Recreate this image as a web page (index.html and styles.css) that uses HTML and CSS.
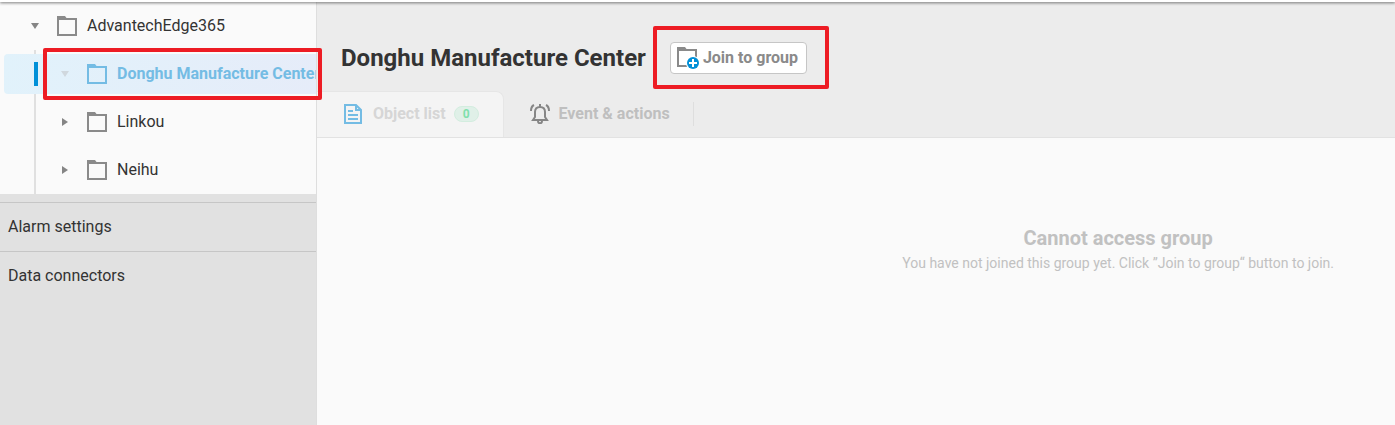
FILE: index.html
```html
<!DOCTYPE html>
<html lang="en">
<head>
    <meta charset="UTF-8">
    <meta name="viewport" content="width=device-width, initial-scale=1.0">
    <title>Donghu Manufacture Center</title>
    <link rel="stylesheet" href="styles.css">
</head>
<body>
    <svg class="sprite" aria-hidden="true">
        <symbol id="folder" viewBox="0 0 20 20">
            <path fill="currentColor" fill-rule="evenodd" d="M0 0H8L9.5 2H20V20H0ZM2 4V18H18V4Z"/>
        </symbol>
    </svg>

    <header class="topbar"></header>

    <div class="layout">
        <aside class="sidebar">
            <nav class="tree">
                <div class="row">
                    <span class="arrow arrow-down"></span>
                    <svg class="icon"><use href="#folder"/></svg>
                    <a href="#">AdvantechEdge365</a>
                </div>
                <div class="children">
                    <div class="row selected">
                        <span class="arrow arrow-down"></span>
                        <svg class="icon"><use href="#folder"/></svg>
                        <a href="#">Donghu Manufacture Center</a>
                    </div>
                    <div class="row">
                        <span class="arrow arrow-right"></span>
                        <svg class="icon"><use href="#folder"/></svg>
                        <a href="#">Linkou</a>
                    </div>
                    <div class="row">
                        <span class="arrow arrow-right"></span>
                        <svg class="icon"><use href="#folder"/></svg>
                        <a href="#">Neihu</a>
                    </div>
                </div>
                <div class="highlight highlight-tree"></div>
            </nav>
            <nav class="links">
                <a href="#">Alarm settings</a>
                <a href="#">Data connectors</a>
            </nav>
        </aside>

        <main class="content">
            <div class="group-header">
                <div class="title-row">
                    <h1>Donghu Manufacture Center</h1>
                    <div class="join">
                        <button type="button" class="join-btn">
                            <svg width="22" height="22" viewBox="0 0 22 22" aria-hidden="true">
                                <path fill="#8a8a8a" fill-rule="evenodd" d="M0 0H8L9.5 2H20V20H0ZM2 4V18H18V4Z"/>
                                <circle cx="16" cy="16" r="7" fill="#fff"/>
                                <circle cx="16" cy="16" r="6" fill="#0090d8"/>
                                <path d="M16 12V20M12 16H20" stroke="#fff" stroke-width="2"/>
                            </svg>
                            Join to group
                        </button>
                        <div class="highlight highlight-join"></div>
                    </div>
                </div>
                <div class="tabs">
                    <a href="#" class="tab active">
                        <svg width="20" height="20" viewBox="0 0 20 20" fill="none" stroke="#74bce4" stroke-width="2" aria-hidden="true">
                            <path d="M2 1H13L18 6V19H2Z"/>
                            <path d="M13 1V6H18M5 7H10M5 11H15M5 15H15"/>
                        </svg>
                        Object list
                        <span class="badge">0</span>
                    </a>
                    <a href="#" class="tab">
                        <svg width="20" height="20" viewBox="0 0 20 20" fill="none" stroke="#858585" stroke-width="2" aria-hidden="true">
                            <path d="M3 16H17L15 13V8C15 5 13 3 10 3C7 3 5 5 5 8V13ZM10 0V3"/>
                            <path d="M8 17C8 20 12 20 12 17M4 1C2 2 1 4 1 7M16 1C18 2 19 4 19 7"/>
                        </svg>
                        Event &amp; actions
                    </a>
                </div>
            </div>

            <section class="empty">
                <div class="message">
                    <h2>Cannot access group</h2>
                    <p>You have not joined this group yet. Click ”Join to group“ button to join.</p>
                </div>
            </section>
        </main>
    </div>
</body>
</html>
```
FILE: styles.css
```css
* {
    box-sizing: border-box;
}
body {
    margin: 0;
    min-height: 100vh;
    display: flex;
    flex-direction: column;
    font-family: Roboto, sans-serif;
    font-size: 16px;
    line-height: 24px;
    color: #333;
    background-color: #fafafa;
}
a {
    color: inherit;
    text-decoration: none;
}
h1, h2, p {
    margin: 0;
}
.sprite {
    position: absolute;
    width: 0;
    height: 0;
}
.topbar {
    position: relative;
    z-index: 1;
    height: 2px;
    background-color: #fff;
    box-shadow: 0 1px 3px rgba(0, 0, 0, 0.6);
}
.layout {
    flex: 1;
    display: grid;
    grid-template-columns: 317px 1fr;
}

/* sidebar */
.sidebar {
    background-color: #e1e1e1;
    border-right: 1px solid #dedede;
}
.tree {
    position: relative;
    background-color: #fafafa;
}
.row {
    display: flex;
    align-items: center;
    height: 48px;
    padding-left: 30px;
    white-space: nowrap;
    overflow: hidden;
}
.children {
    position: relative;
    padding-top: 4px;
}
.children::before {
    content: "";
    position: absolute;
    top: 0;
    bottom: 0;
    left: 34px;
    width: 2px;
    background-color: #e0e0e0;
}
.children .row {
    padding-left: 60px;
}
.arrow {
    flex: none;
    width: 10px;
    margin-right: 17px;
    display: flex;
    justify-content: center;
    color: #858585;
}
.arrow::before {
    content: "";
    border: 4px solid transparent;
}
.arrow-down::before {
    border-width: 6px 4px 0;
    border-top-color: currentColor;
}
.arrow-right::before {
    border-width: 4px 0 4px 6px;
    border-left-color: currentColor;
}
.icon {
    flex: none;
    width: 20px;
    height: 20px;
    margin-right: 10px;
    color: #8a8a8a;
}
.children .selected {
    position: relative;
    height: 40px;
    margin: 0 0 4px 4px;
    padding-left: 56px;
    border-radius: 4px 0 0 4px;
    background: linear-gradient(100deg, #e1f2fb, #e6ecf9);
    color: #74bce4;
    font-weight: 700;
}
.selected::before {
    content: "";
    position: absolute;
    top: 8px;
    left: 30px;
    width: 4px;
    height: 24px;
    background-color: #0090d8;
}
.selected .arrow {
    color: #d0d8de;
}
.selected .icon {
    color: #74bce4;
}
.links {
    padding-top: 8px;
}
.links a {
    display: block;
    padding: 12px 8px;
    border-top: 1px solid #c6c6c6;
}

/* content */
.content {
    display: flex;
    flex-direction: column;
    min-width: 0;
}
.group-header {
    background-color: #ececec;
    border-bottom: 1px solid #e2e2e2;
}
.title-row {
    display: flex;
    align-items: center;
    gap: 24px;
    padding: 40px 24px 17px;
}
h1 {
    font-size: 24px;
    line-height: 32px;
    font-weight: 700;
}
.join {
    position: relative;
}
.join-btn {
    display: flex;
    align-items: center;
    gap: 4px;
    height: 32px;
    padding: 0 8px 0 6px;
    border: 1px solid #c6c6c6;
    border-radius: 4px;
    background-color: #fff;
    color: #8a8a8a;
    font: 700 16px/24px Roboto, sans-serif;
}
.tabs {
    display: flex;
    height: 46px;
}
.tab {
    position: relative;
    display: flex;
    align-items: center;
    gap: 9px;
    padding: 0 24px 0 26px;
    color: #bfbfbf;
    font-weight: 700;
}
.tab::after {
    content: "";
    width: 1px;
    height: 24px;
    margin-left: 14px;
    margin-right: -24px;
    background-color: #dedede;
}
.active {
    gap: 10px;
    padding: 0 24px 1px 26px;
    border-top: 1px solid #e6e6e6;
    border-right: 1px solid #e6e6e6;
    border-top-right-radius: 8px;
    background-color: #f4f4f4;
    color: #d6d6d6;
}
.active::after {
    display: none;
}
.badge {
    padding: 0 8px;
    margin-left: -2px;
    border: 1px solid #d3eddf;
    border-radius: 8px;
    background-color: #e0f0e8;
    color: #7fe0ac;
    font-size: 12px;
    line-height: 14px;
}
.empty {
    display: flex;
    justify-content: flex-end;
    padding: 88px 61px 24px;
    color: #c1c1c1;
    text-align: center;
}
h2 {
    font-size: 20px;
    line-height: 25px;
}
.message p {
    font-size: 14px;
    line-height: 24px;
}

/* callout frames drawn over the page */
.highlight {
    position: absolute;
    z-index: 2;
    border: 4px solid #ed1c24;
    border-radius: 2px;
    pointer-events: none;
}
.highlight-tree {
    top: 46px;
    left: 43px;
    right: -6px;
    height: 52px;
}
.highlight-join {
    top: -16px;
    right: -22px;
    bottom: -15px;
    left: -17px;
}
```
